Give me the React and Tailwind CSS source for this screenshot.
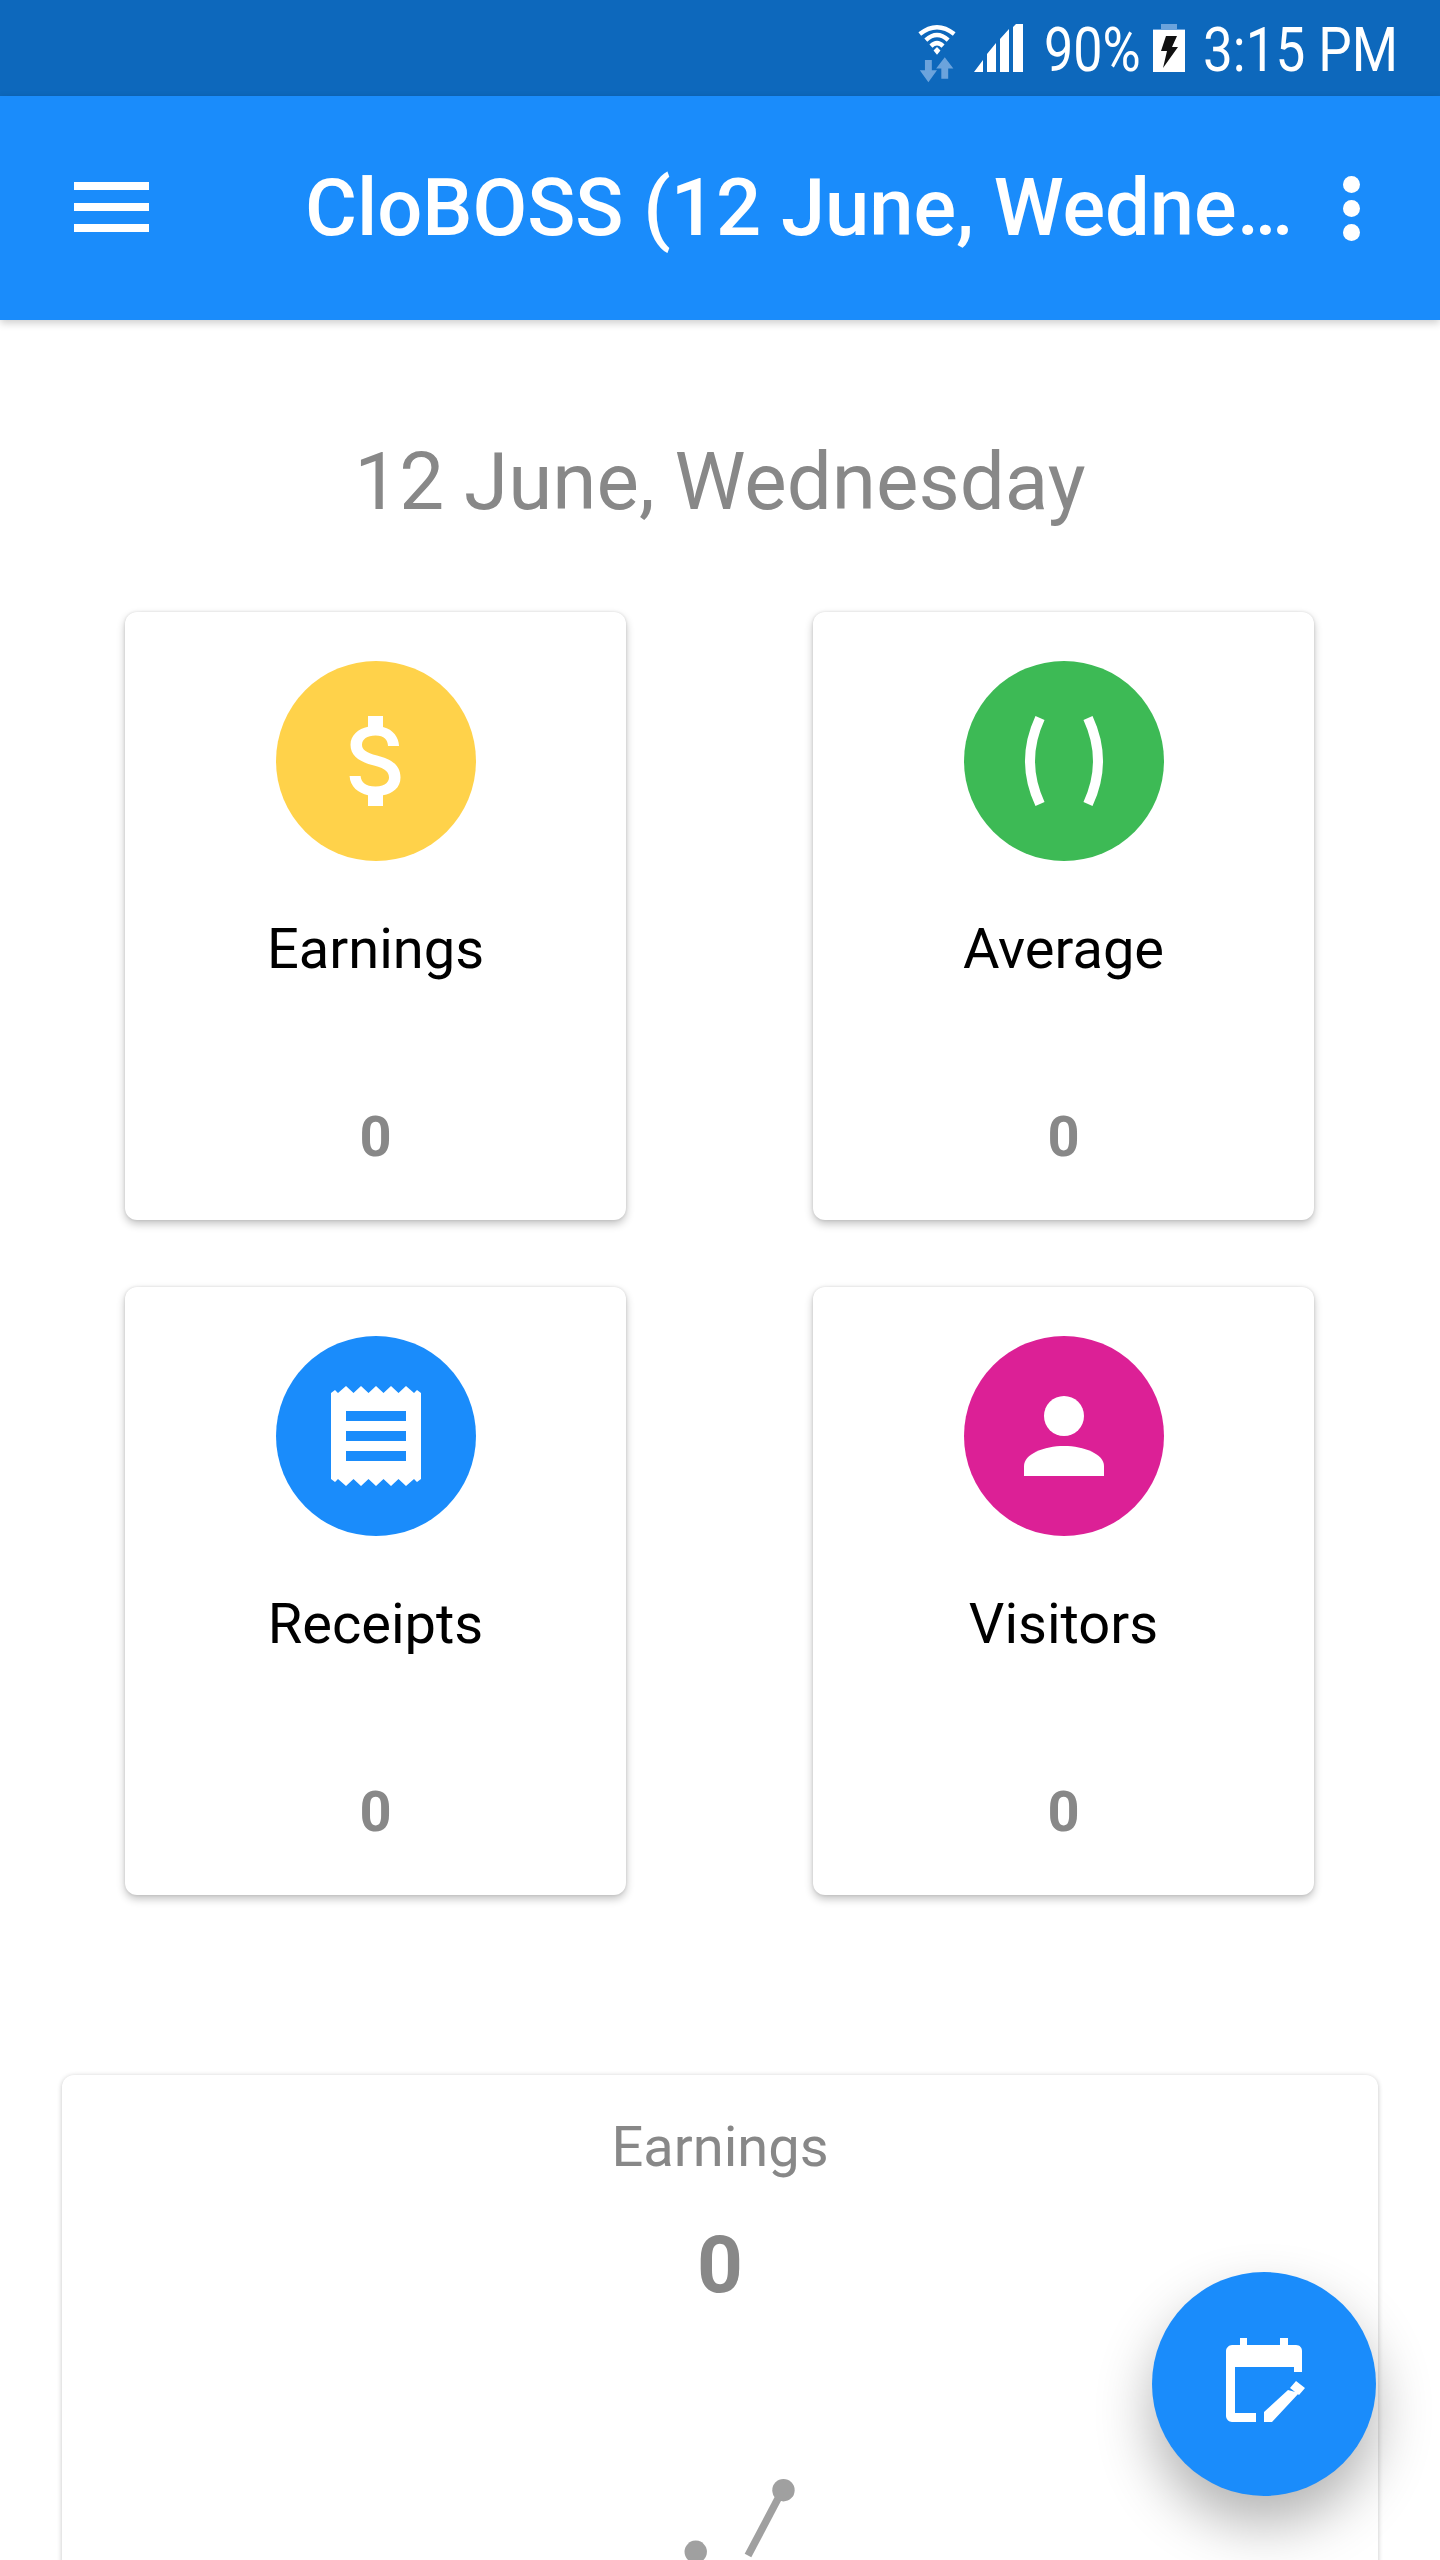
import React from "react";

const stats = [
  { label: "Earnings", color: "bg-[#ffd24a]", icon: "money" },
  { label: "Average", color: "bg-[#3dba55]", icon: "average" },
  { label: "Receipts", color: "bg-[#1a8cfb]", icon: "receipt" },
  { label: "Visitors", color: "bg-[#dc2096]", icon: "person" },
];

const StatIcon = ({ type }) => {
  if (type === "money") {
    return (
      <svg viewBox="0 0 24 24" className="ml-[4px] w-[120px] h-[120px]" fill="#fff">
        <path d="M11.8 10.9c-2.27-.59-3-1.2-3-2.15 0-1.09 1.01-1.85 2.7-1.85 1.78 0 2.44.85 2.5 2.1h2.21c-.07-1.72-1.12-3.3-3.21-3.81V3h-3v2.16c-1.94.42-3.5 1.68-3.5 3.61 0 2.31 1.91 3.46 4.7 4.13 2.5.6 3 1.48 3 2.41 0 .69-.49 1.79-2.7 1.79-2.06 0-2.87-.92-2.98-2.1h-2.2c.12 2.19 1.76 3.42 3.68 3.83V21h3v-2.15c1.95-.37 3.5-1.5 3.5-3.55 0-2.84-2.43-3.81-4.7-4.4z" />
      </svg>
    );
  }
  if (type === "average") {
    return (
      <svg viewBox="0 0 200 200" className="w-[200px] h-[200px]" fill="none" stroke="#fff" strokeWidth="10">
        <path d="M76 57 Q56 100 76 143" />
        <path d="M124 57 Q144 100 124 143" />
      </svg>
    );
  }
  if (type === "receipt") {
    return (
      <svg viewBox="0 0 200 200" className="w-[200px] h-[200px]">
        <path
          fill="#fff"
          d="M55 57 L59 54 L62 57 L70 50 L77.500 57 L85 50 L92.500 57 L100 50 L107.500 57 L115 50 L122.500 57 L130 50 L138 57 L141 54 L145 57 V143 L141 146 L138 143 L130 150 L122.500 143 L115 150 L107.500 143 L100 150 L92.500 143 L85 150 L77.500 143 L70 150 L62 143 L59 146 L55 143 Z"
        />
        <path fill="#1a8cfb" d="M70 75h60v10H70zM70 95h60v10H70zM70 115h60v10H70z" />
      </svg>
    );
  }
  return (
    <svg viewBox="0 0 200 200" className="w-[200px] h-[200px]" fill="#fff">
      <circle cx="100" cy="80" r="20" />
      <path d="M60 140 V130 C60 118 80 110 100 110 S140 118 140 130 V140 Z" />
    </svg>
  );
};

const StatCard = ({ stat }) => (
  <div className="h-[608px] rounded-[12px] bg-white flex flex-col items-center pt-[49px] shadow-[0_4px_8px_rgba(0,0,0,0.24),0_0_3px_rgba(0,0,0,0.12)]">
    <div className={`w-[200px] h-[200px] rounded-full flex items-center justify-center ${stat.color}`}>
      <StatIcon type={stat.icon} />
    </div>
    <p className="mt-[48px] text-[56px] leading-[80px] text-black">{stat.label}</p>
    <p className="mt-[108px] text-[56px] leading-[80px] font-bold text-[#888888]">0</p>
  </div>
);

const StatusBar = () => (
  <div className="h-[96px] bg-[#0d68bc] relative">
    <svg viewBox="0 0 44 72" className="absolute left-[915px] top-[22px] w-[44px] h-[62px]" fill="none">
      <path d="M2 14 Q22 -2 42 14" stroke="#fff" strokeWidth="5" />
      <path d="M9 21 Q22 9 35 21" stroke="#fff" strokeWidth="5" />
      <path d="M15 28 Q22 21 29 28" stroke="#fff" strokeWidth="5" />
      <path d="M18 33 L22 29 L26 33 L22 38 Z" fill="#fff" />
      <path d="M8 44 h8 v12 h6 l-10 14 l-10 -14 h6 z M27 66 h8 v-12 h6 l-10 -13 l-10 13 h6 z" fill="#6ba3dc" />
    </svg>
    <svg viewBox="0 0 49 48" className="absolute left-[974px] top-[24px] w-[49px] h-[48px]" fill="#fff">
      <path d="M0 48 L9 36 V48 Z M13 48 V30 L22 19 V48 Z M26 48 V15 L35 5 V48 Z M39 48 V3 L49 -7 V48 Z" />
    </svg>
    <div className="absolute left-[1044px] top-[12px] text-[62px] leading-[76px] text-white origin-left scale-x-[0.84]">90%</div>
    <svg viewBox="0 0 32 48" className="absolute left-[1153px] top-[24px] w-[32px] h-[48px]">
      <path fill="#6ba3dc" d="M8 0h16v5h8v5H0V5h8z" />
      <path fill="#fff" d="M0 6h32v42H0z" />
      <path fill="#111" d="M13 12h11l-5 11h6L10 44l4-17H8z" />
    </svg>
    <div className="absolute left-[1203px] top-[12px] text-[62px] leading-[76px] text-white origin-left scale-x-[0.855] whitespace-nowrap">3:15 PM</div>
  </div>
);

const Header = () => (
  <header className="h-[224px] bg-[#1a8cfb] flex items-center relative z-10 shadow-[0_3px_8px_rgba(0,0,0,0.2)]">
    <div className="ml-[74px] mb-[2px] w-[75px] flex flex-col gap-[13px]">
      <div className="h-[8px] bg-white" />
      <div className="h-[8px] bg-white" />
      <div className="h-[8px] bg-white" />
    </div>
    <h1 className="ml-[156px] text-[79.5px] font-medium text-white whitespace-nowrap">CloBOSS (12 June, Wedne…</h1>
    <div className="absolute left-[1343px] top-[80px] flex flex-col gap-[7px]">
      <div className="w-[17px] h-[17px] rounded-full bg-white" />
      <div className="w-[17px] h-[17px] rounded-full bg-white" />
      <div className="w-[17px] h-[17px] rounded-full bg-white" />
    </div>
  </header>
);

const App = () => {
  return (
    <div className="relative w-[1440px] h-[2560px] overflow-hidden bg-white font-['Roboto',sans-serif]">
      <StatusBar />
      <Header />

      <main>
        <h2 className="mt-[116px] text-center text-[80px] leading-[92px] text-[#888888]">12 June, Wednesday</h2>

        <div className="mt-[84px] ml-[125px] w-[1189px] grid grid-cols-[501px_501px] gap-x-[187px] gap-y-[67px]">
          {stats.map((s) => (
            <StatCard key={s.label} stat={s} />
          ))}
        </div>

        <section className="mt-[180px] mx-[62px] h-[600px] rounded-[12px] bg-white flex flex-col items-center shadow-[0_1px_5px_rgba(0,0,0,0.24)]">
          <p className="mt-[44px] text-[56px] leading-[56px] text-[#888888]">Earnings</p>
          <p className="mt-[45px] text-[80px] leading-[90px] font-bold text-[#888888]">0</p>
          <svg viewBox="0 0 1316 300" className="w-[1316px] h-[300px] mt-[85px]" fill="#a0a0a0">
            <path d="M726 100 L688 172" stroke="#a0a0a0" strokeWidth="8" fill="none" />
            <circle cx="726" cy="102" r="12" />
            <circle cx="632" cy="168" r="12" />
          </svg>
        </section>
      </main>

      <button className="absolute left-[1152px] top-[2272px] w-[224px] h-[224px] rounded-full bg-[#1a8cfb] shadow-[0_28px_56px_rgba(0,0,0,0.3)] flex items-center justify-center">
        <svg viewBox="0 0 224 224" className="w-[224px] h-[224px]" fill="#fff">
          <path
            fillRule="evenodd"
            d="M88 66h7v7h33v-7h8v7h8c4 0 6 3 6 6v21h-8v-5H83v46h21v9H80c-3 0-6-3-6-6V79c0-3 3-6 6-6h8z"
          />
          <path d="M112 150v-10l24-22 11 3-27 29zM144 109l9 7-6 7-9-7z" />
        </svg>
      </button>
    </div>
  );
};

export default App;
